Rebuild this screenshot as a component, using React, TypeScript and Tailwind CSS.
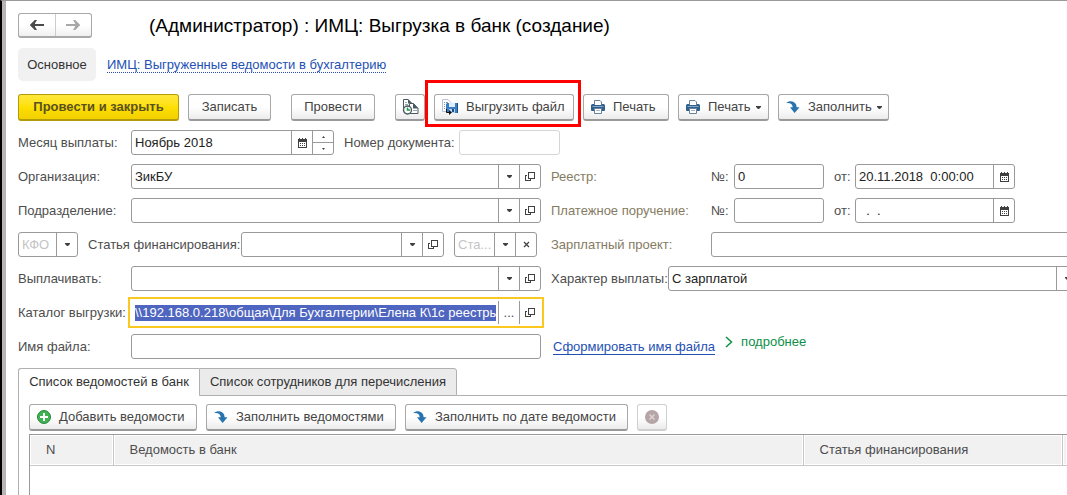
import { useEffect, useRef } from "react";
import type { ReactNode } from "react";

/* ---------- icons ---------- */

function ArrowDown() {
    return (
        <svg width="5" height="3" viewBox="0 0 5 3" className="shrink-0">
            <path d="M0 0h5v1L3 3H2L0 1z" fill="#404040" />
        </svg>
    );
}

function OpenIcon() {
    return (
        <svg width="10" height="10" viewBox="0 0 10 10" fill="none" stroke="#404040" shapeRendering="crispEdges">
            <path d="M3.5 .5h6v6h-6zM2 3.500H.5v5h5V7" />
        </svg>
    );
}

function CalendarIcon() {
    return (
        <svg width="9" height="10" viewBox="0 0 9 10" shapeRendering="crispEdges">
            <path d="M1 0h1v1h2V0h1v1h2V0h1v1h1v9H0V1h1z" fill="#404040" />
            <path d="M1 4h7v5H1z" fill="#fff" />
            <path d="M2 5h1v1H2zM4 5h1v1H4zM6 5h1v1H6zM2 7h1v1H2zM4 7h1v1H4zM6 7h1v1H6z" fill="#404040" />
        </svg>
    );
}

function NavArrow({ color, flip }: { color: string; flip?: boolean }) {
    return (
        <svg width="14" height="12" viewBox="0 0 14 12" className={flip ? "-scale-x-100" : ""}>
            <path d="M0 6l5-5h2L4.500 5H14v2H4.500L7 11H5z" fill={color} />
            <path d="M0 6l5-5v10z" fill={color} />
        </svg>
    );
}

function PrinterIcon() {
    return (
        <svg width="14" height="14" viewBox="0 0 14 14" className="shrink-0">
            <path d="M3.500 5V.5H9L10.500 2v3" fill="#fff" stroke="#6b8299" />
            <path d="M0 5.500Q0 4 1.500 4H3v1h8V4h1.500Q14 4 14 5.500V10q0 1-1 1H1q-1 0-1-1z" fill="#2f5f8c" />
            <path d="M1.500 6.500h11" stroke="#86a8c8" />
            <path d="M3.500 8.500h7v5h-7z" fill="#fff" stroke="#6b8299" />
            <path d="M5 10.500h4" stroke="#a9b8c6" />
        </svg>
    );
}

function FillIcon() {
    return (
        <svg width="14" height="13" viewBox="0 0 14 13" className="shrink-0">
            <path d="M0 2.200C2.500 0 5.500-.3 8 1.200c1.800 1.100 2.600 2.800 2.600 5h2.900L8.600 12 4 6.200h2.700C6.600 3.300 4.200 1.600 0 2.200z" fill="#2774ae" />
        </svg>
    );
}

function HistoryIcon() {
    return (
        <svg width="17" height="16" viewBox="0 0 17 16" fill="none">
            <path d="M1.500 11V.5H6L9.500 4v7z" fill="#fff" stroke="#475a62" />
            <path d="M6 0l4 4.500H6z" fill="#475a62" />
            <path d="M3 3.500h2M3 5.500h3" stroke="#9aa7ad" />
            <path d="M7.500 14.500v-10h4l4.500 5v5z" fill="#fff" stroke="#475a62" />
            <path d="M11 4l5.500 5.500H11z" fill="#475a62" />
            <path d="M11 11.500h4" stroke="#9aa7ad" />
            <circle cx="5.500" cy="11" r="4" fill="#fff" stroke="#475a62" strokeWidth="1.400" />
            <path d="M5.500 8.500V11H8" stroke="#189a3c" strokeWidth="1.500" />
        </svg>
    );
}

function ExportIcon() {
    return (
        <svg width="16" height="16" viewBox="0 0 16 16" fill="none" className="shrink-0">
            <path d="M.5 12.500V.5H6l3 3v9z" fill="#fff" stroke="#b4c3d8" />
            <path d="M2 3.500h1M4 3.500h2M2 5.500h1M4 5.500h3M2 7.500h1M2 9.500h1" stroke="#7f97bd" />
            <path d="M4 5l1-1h11v10H5l-1-1z" fill="#3a7fc0" />
            <path d="M15 4h1v10h-1z" fill="#1d4c86" />
            <path d="M7 4h6v4H7z" fill="#dceefb" />
            <path d="M7 10h6v4H7z" fill="#b4d4ef" />
            <path d="M10 10h2v3h-2z" fill="#1d4c86" />
            <path d="M4.500 10v3.500H8" stroke="#111" />
            <path d="M7 11l3 2.500L7 16z" fill="#111" />
        </svg>
    );
}

function PlusIcon() {
    return (
        <svg width="14" height="14" viewBox="0 0 14 14" className="shrink-0">
            <circle cx="7" cy="7" r="6.500" fill="#3fb252" stroke="#27873a" />
            <path d="M7 3v8M3 7h8" stroke="#fff" strokeWidth="2" />
        </svg>
    );
}

function CancelIcon() {
    return (
        <svg width="14" height="14" viewBox="0 0 14 14">
            <circle cx="7" cy="7" r="7" fill="#b5a5a6" />
            <path d="M4.500 4.500l5 5M9.500 4.500l-5 5" stroke="#ddd3d3" strokeWidth="1.500" />
        </svg>
    );
}

/* ---------- controls ---------- */

const BTN =
    "flex h-[27px] shrink-0 items-center rounded-[3px] border border-b-2 bg-linear-to-b from-white from-50% to-[#ececec] whitespace-nowrap text-[#444]";
const BTN_BORDER = "border-[#a8a8a8] border-b-[#999]";

interface ToolButtonProps {
    width: string;
    icon?: ReactNode;
    menu?: boolean;
    children: ReactNode;
}

function ToolButton({ width, icon, menu, children }: ToolButtonProps) {
    if (!icon) {
        return <button className={`${BTN} ${BTN_BORDER} ${width} justify-center`}>{children}</button>;
    }
    return (
        <button className={`${BTN} ${BTN_BORDER} ${width} pl-[7px]`}>
            {icon}
            <span className="ml-2">{children}</span>
            {menu && <span className="ml-[5px]"><ArrowDown /></span>}
        </button>
    );
}

const SIDE = "flex w-[21px] shrink-0 items-center justify-center border-l border-[#999]";

type SideKind = "drop" | "open" | "calendar" | "clear";

const SIDE_LABEL: Record<SideKind, string> = {
    drop: "Выбрать из списка",
    open: "Открыть",
    calendar: "Календарь",
    clear: "Очистить",
};

function SideButton({ kind }: { kind: SideKind }) {
    return (
        <button className={SIDE} aria-label={SIDE_LABEL[kind]}>
            {kind === "drop" && <ArrowDown />}
            {kind === "open" && <OpenIcon />}
            {kind === "calendar" && <CalendarIcon />}
            {kind === "clear" && (
                <svg width="7" height="7" viewBox="0 0 7 7" stroke="#404040" strokeWidth="1.200">
                    <path d="M1 1l5 5M6 1L1 6" />
                </svg>
            )}
        </button>
    );
}

interface FieldProps {
    id: string;
    width: string;
    value?: string;
    placeholder?: string;
    label?: string;
    side?: SideKind[];
    border?: string;
    children?: ReactNode;
}

function Field({ id, width, value, placeholder, label, side = [], border = "border-[#999]", children }: FieldProps) {
    return (
        <div className={`flex h-[25px] rounded-[3px] border bg-white ${border} ${width}`}>
            <input
                id={id}
                aria-label={label}
                defaultValue={value}
                placeholder={placeholder}
                className="w-0 min-w-0 flex-1 bg-transparent px-[3px] text-[#222] outline-none placeholder:text-[#c4c4c4]"
            />
            {side.map(kind => (
                <SideButton key={kind} kind={kind} />
            ))}
            {children}
        </div>
    );
}

function Row({ left, right }: { left: ReactNode; right?: ReactNode }) {
    return (
        <div className="flex h-[25px] items-center gap-[10px]">
            <div className="flex w-[523px] shrink-0 items-center">{left}</div>
            {right && <div className="flex min-w-0 flex-1 items-center">{right}</div>}
        </div>
    );
}

function Label({ htmlFor, children }: { htmlFor: string; children: ReactNode }) {
    return (
        <label htmlFor={htmlFor} className="w-[113px] shrink-0 whitespace-nowrap">
            {children}
        </label>
    );
}

function NumberAndDate({ name, title, number, date }: { name: string; title: string; number?: string; date: string }) {
    return (
        <>
            <span className="w-40 shrink-0 text-[#857b62]">{title}</span>
            <label htmlFor={`${name}-number`} className="w-[23px] shrink-0">№:</label>
            <Field id={`${name}-number`} width="w-[90px] shrink-0" value={number} />
            <label htmlFor={`${name}-date`} className="ml-[10px] w-[21px] shrink-0">от:</label>
            <Field id={`${name}-date`} width="w-40 shrink-0" value={date} side={["calendar"]} />
        </>
    );
}

/* Поле каталога: в фокусе, весь текст выделен */
function FolderField() {
    const ref = useRef<HTMLInputElement>(null);

    useEffect(() => {
        ref.current?.focus({ preventScroll: true });
        ref.current?.select();
    }, []);

    return (
        <div className="-mx-[3px] flex h-[31px] flex-1 items-center border-2 border-[#fac81e] bg-white pr-[2px]">
            <input
                id="folder"
                ref={ref}
                defaultValue="\\192.168.0.218\общая\Для Бухгалтерии\Елена К\1с реестры"
                className="ml-[5px] h-4 w-0 min-w-0 flex-1 leading-4 text-[#222] outline-none selection:bg-[#4f66c0] selection:text-white"
            />
            <button className="ml-[2px] flex h-[23px] w-[21px] items-center justify-center border-l border-[#999]" aria-label="Выбрать каталог">
                ...
            </button>
            <button className="flex h-[23px] w-[21px] items-center justify-center border-l border-[#999]" aria-label="Открыть каталог">
                <OpenIcon />
            </button>
        </div>
    );
}

const TH = "border-r border-[#c8c8c8] pl-4 font-normal shadow-[inset_0_0_0_1px_white]";

export default function App() {
    return (
        <div className="flex min-h-screen flex-col overflow-hidden border-t border-l-2 border-t-[#999] border-l-black bg-white font-['Liberation_Sans',Arial,sans-serif] text-[13px] leading-4 text-[#4d4d4d]">
            <div className="flex flex-1 flex-col border-l-4 border-[#b8b4b4] pl-3">
                <header className="flex items-end pt-3">
                    <div className="flex h-[25px] w-[74px] rounded-[3px] border border-b-2 border-[#a8a8a8] bg-linear-to-b from-white from-50% to-[#f0f0f0]">
                        <button className="flex flex-1 items-center justify-center" aria-label="Назад">
                            <NavArrow color="#4a4a4a" />
                        </button>
                        <button className="flex flex-1 items-center justify-center border-l border-[#ccc]" aria-label="Вперед">
                            <NavArrow color="#a8a8a8" flip />
                        </button>
                    </div>
                    <h1 className="ml-[57px] text-[19px] leading-6 whitespace-nowrap text-black">
                        (Администратор) : ИМЦ: Выгрузка в банк (создание)
                    </h1>
                </header>

                <nav className="mt-[10px] flex items-center gap-[11px]">
                    <a href="#main" className="flex h-[33px] w-[78px] items-center justify-center rounded-[5px] bg-[#f1f1f1] pt-px text-[#333]">
                        Основное
                    </a>
                    <a href="#exported" className="border-b border-dotted border-[#2450b4] pt-px leading-[15px] text-[#2450b4]">
                        ИМЦ: Выгруженные ведомости в бухгалтерию
                    </a>
                </nav>

                <div className="mt-[13px] flex gap-5">
                    <div className="flex gap-[9px]">
                        <button className="h-[27px] w-[161px] shrink-0 rounded-[3px] border border-b-2 border-[#b39c0c] bg-linear-to-b from-[#ffe83a] via-[#fddf00] to-[#f2d000] font-bold whitespace-nowrap text-[#5a5020]">
                            Провести и закрыть
                        </button>
                        <ToolButton width="w-[83px]">Записать</ToolButton>
                    </div>
                    <ToolButton width="w-[84px]">Провести</ToolButton>
                    <div className="flex gap-[9px]">
                        <button className={`${BTN} ${BTN_BORDER} w-[30px] justify-center`} aria-label="История">
                            <HistoryIcon />
                        </button>
                        <div className="relative">
                            <ToolButton width="w-[140px]" icon={<ExportIcon />}>Выгрузить файл</ToolButton>
                            <div className="pointer-events-none absolute -top-[14px] -right-[7px] -bottom-[6px] -left-[9px] border-3 border-[#fe0000]" />
                        </div>
                        <ToolButton width="w-[86px]" icon={<PrinterIcon />}>Печать</ToolButton>
                        <ToolButton width="w-[91px]" icon={<PrinterIcon />} menu>Печать</ToolButton>
                        <ToolButton width="w-[111px]" icon={<FillIcon />} menu>Заполнить</ToolButton>
                    </div>
                </div>

                <form className="mt-[9px] flex flex-col gap-[9px]" onSubmit={e => e.preventDefault()}>
                    <Row
                        left={
                            <>
                                <Label htmlFor="month">Месяц выплаты:</Label>
                                <Field id="month" width="w-[203px] shrink-0" value="Ноябрь 2018" side={["calendar"]}>
                                    <div className="flex w-[21px] flex-col border-l border-[#999]">
                                        <button className="flex flex-1 items-center justify-center" aria-label="Следующий месяц">
                                            <svg width="3" height="2" viewBox="0 0 3 2"><path d="M0 2h3L1.500 0z" fill="#404040" /></svg>
                                        </button>
                                        <button className="flex flex-1 items-center justify-center border-t border-[#999]" aria-label="Предыдущий месяц">
                                            <svg width="3" height="2" viewBox="0 0 3 2"><path d="M0 0h3L1.500 2z" fill="#404040" /></svg>
                                        </button>
                                    </div>
                                </Field>
                                <label htmlFor="doc-number" className="ml-[10px] w-[115px] shrink-0 whitespace-nowrap">Номер документа:</label>
                                <Field id="doc-number" width="w-[101px] shrink-0" border="border-[#d5d5d5]" />
                            </>
                        }
                    />
                    <Row
                        left={
                            <>
                                <Label htmlFor="org">Организация:</Label>
                                <Field id="org" width="flex-1" value="ЗикБУ" side={["drop", "open"]} />
                            </>
                        }
                        right={<NumberAndDate name="registry" title="Реестр:" number="0" date="20.11.2018  0:00:00" />}
                    />
                    <Row
                        left={
                            <>
                                <Label htmlFor="department">Подразделение:</Label>
                                <Field id="department" width="flex-1" side={["drop", "open"]} />
                            </>
                        }
                        right={<NumberAndDate name="payment" title="Платежное поручение:" date="  .  ." />}
                    />
                    <Row
                        left={
                            <>
                                <Field id="kfo" width="w-[60px] shrink-0" label="КФО" placeholder="КФО" side={["drop"]} />
                                <label htmlFor="article" className="ml-[10px] w-[153px] shrink-0 whitespace-nowrap">Статья финансирования:</label>
                                <Field id="article" width="flex-1" side={["drop", "open"]} />
                                <div className="mr-1 ml-[10px] flex">
                                    <Field id="expense" width="w-[83px]" label="Статья расходов" placeholder="Ста..." side={["drop", "clear"]} />
                                </div>
                            </>
                        }
                        right={
                            <>
                                <label htmlFor="project" className="w-40 shrink-0 text-[#857b62]">Зарплатный проект:</label>
                                <Field id="project" width="-mr-5 flex-1" />
                            </>
                        }
                    />
                    <Row
                        left={
                            <>
                                <Label htmlFor="payee">Выплачивать:</Label>
                                <Field id="payee" width="flex-1" side={["drop", "open"]} />
                            </>
                        }
                        right={
                            <>
                                <label htmlFor="kind" className="w-[117px] shrink-0 whitespace-nowrap">Характер выплаты:</label>
                                <div className="-mr-[11px] flex h-[25px] flex-1 rounded-[3px] border border-[#999]">
                                    <select id="kind" className="min-w-0 flex-1 appearance-none px-[3px] text-[#222] outline-none">
                                        <option>С зарплатой</option>
                                    </select>
                                    <SideButton kind="drop" />
                                </div>
                            </>
                        }
                    />
                    <Row
                        left={
                            <>
                                <Label htmlFor="folder">Каталог выгрузки:</Label>
                                <FolderField />
                            </>
                        }
                    />
                    <Row
                        left={
                            <>
                                <Label htmlFor="file-name">Имя файла:</Label>
                                <Field id="file-name" width="flex-1" />
                            </>
                        }
                        right={
                            <div className="ml-[2px] flex h-[25px] items-center gap-[10px]">
                                <a href="#file-name" className="border-b border-[#2450b4] leading-[15px] whitespace-nowrap text-[#2450b4]">
                                    Сформировать имя файла
                                </a>
                                <button className="flex items-center gap-2 self-start text-[#0c9048]">
                                    <svg width="8" height="12" viewBox="0 0 8 12" fill="none" stroke="#0c9048" strokeWidth="1.500">
                                        <path d="M1 1l5.500 5L1 11" />
                                    </svg>
                                    подробнее
                                </button>
                            </div>
                        }
                    />
                </form>

                <div className="mt-[9px] flex text-[#333]" role="tablist">
                    <button role="tab" aria-selected="true" className="h-7 w-[181px] rounded-tl-[3px] border-t border-l border-[#b0b0b0] bg-white pb-px whitespace-nowrap">
                        Список ведомостей в банк
                    </button>
                    <button role="tab" aria-selected="false" className="h-7 w-[258px] rounded-tr-[3px] border border-[#b0b0b0] bg-[#ebebeb] whitespace-nowrap">
                        Список сотрудников для перечисления
                    </button>
                    <div className="flex-1 border-b border-[#b0b0b0]" />
                </div>

                <section className="flex flex-1 flex-col border-l border-[#b0b0b0] pt-2 pl-[10px]">
                    <div className="flex gap-[9px]">
                        <ToolButton width="w-[168px]" icon={<PlusIcon />}>Добавить ведомости</ToolButton>
                        <ToolButton width="w-[190px]" icon={<FillIcon />}>Заполнить ведомостями</ToolButton>
                        <ToolButton width="w-[223px]" icon={<FillIcon />}>Заполнить по дате ведомости</ToolButton>
                        <button className={`${BTN} w-[30px] justify-center border-[#d0d0d0]`} aria-label="Отменить" disabled>
                            <CancelIcon />
                        </button>
                    </div>
                    <div className="mt-[3px] flex-1 border-t border-l border-[#999]">
                        <table className="w-full table-fixed border-collapse text-left">
                            <thead>
                                <tr className="h-[30px] border-b border-[#c8c8c8] bg-[#f1f1f1]">
                                    <th className={`${TH} w-[83px]`}>N</th>
                                    <th className={TH}>Ведомость в банк</th>
                                    <th className={`${TH} w-[259px]`}>Статья финансирования</th>
                                    <th className="w-[5px] shadow-[inset_0_0_0_1px_white]" aria-label="Прочее" />
                                </tr>
                            </thead>
                            <tbody />
                        </table>
                    </div>
                </section>
            </div>
        </div>
    );
}
